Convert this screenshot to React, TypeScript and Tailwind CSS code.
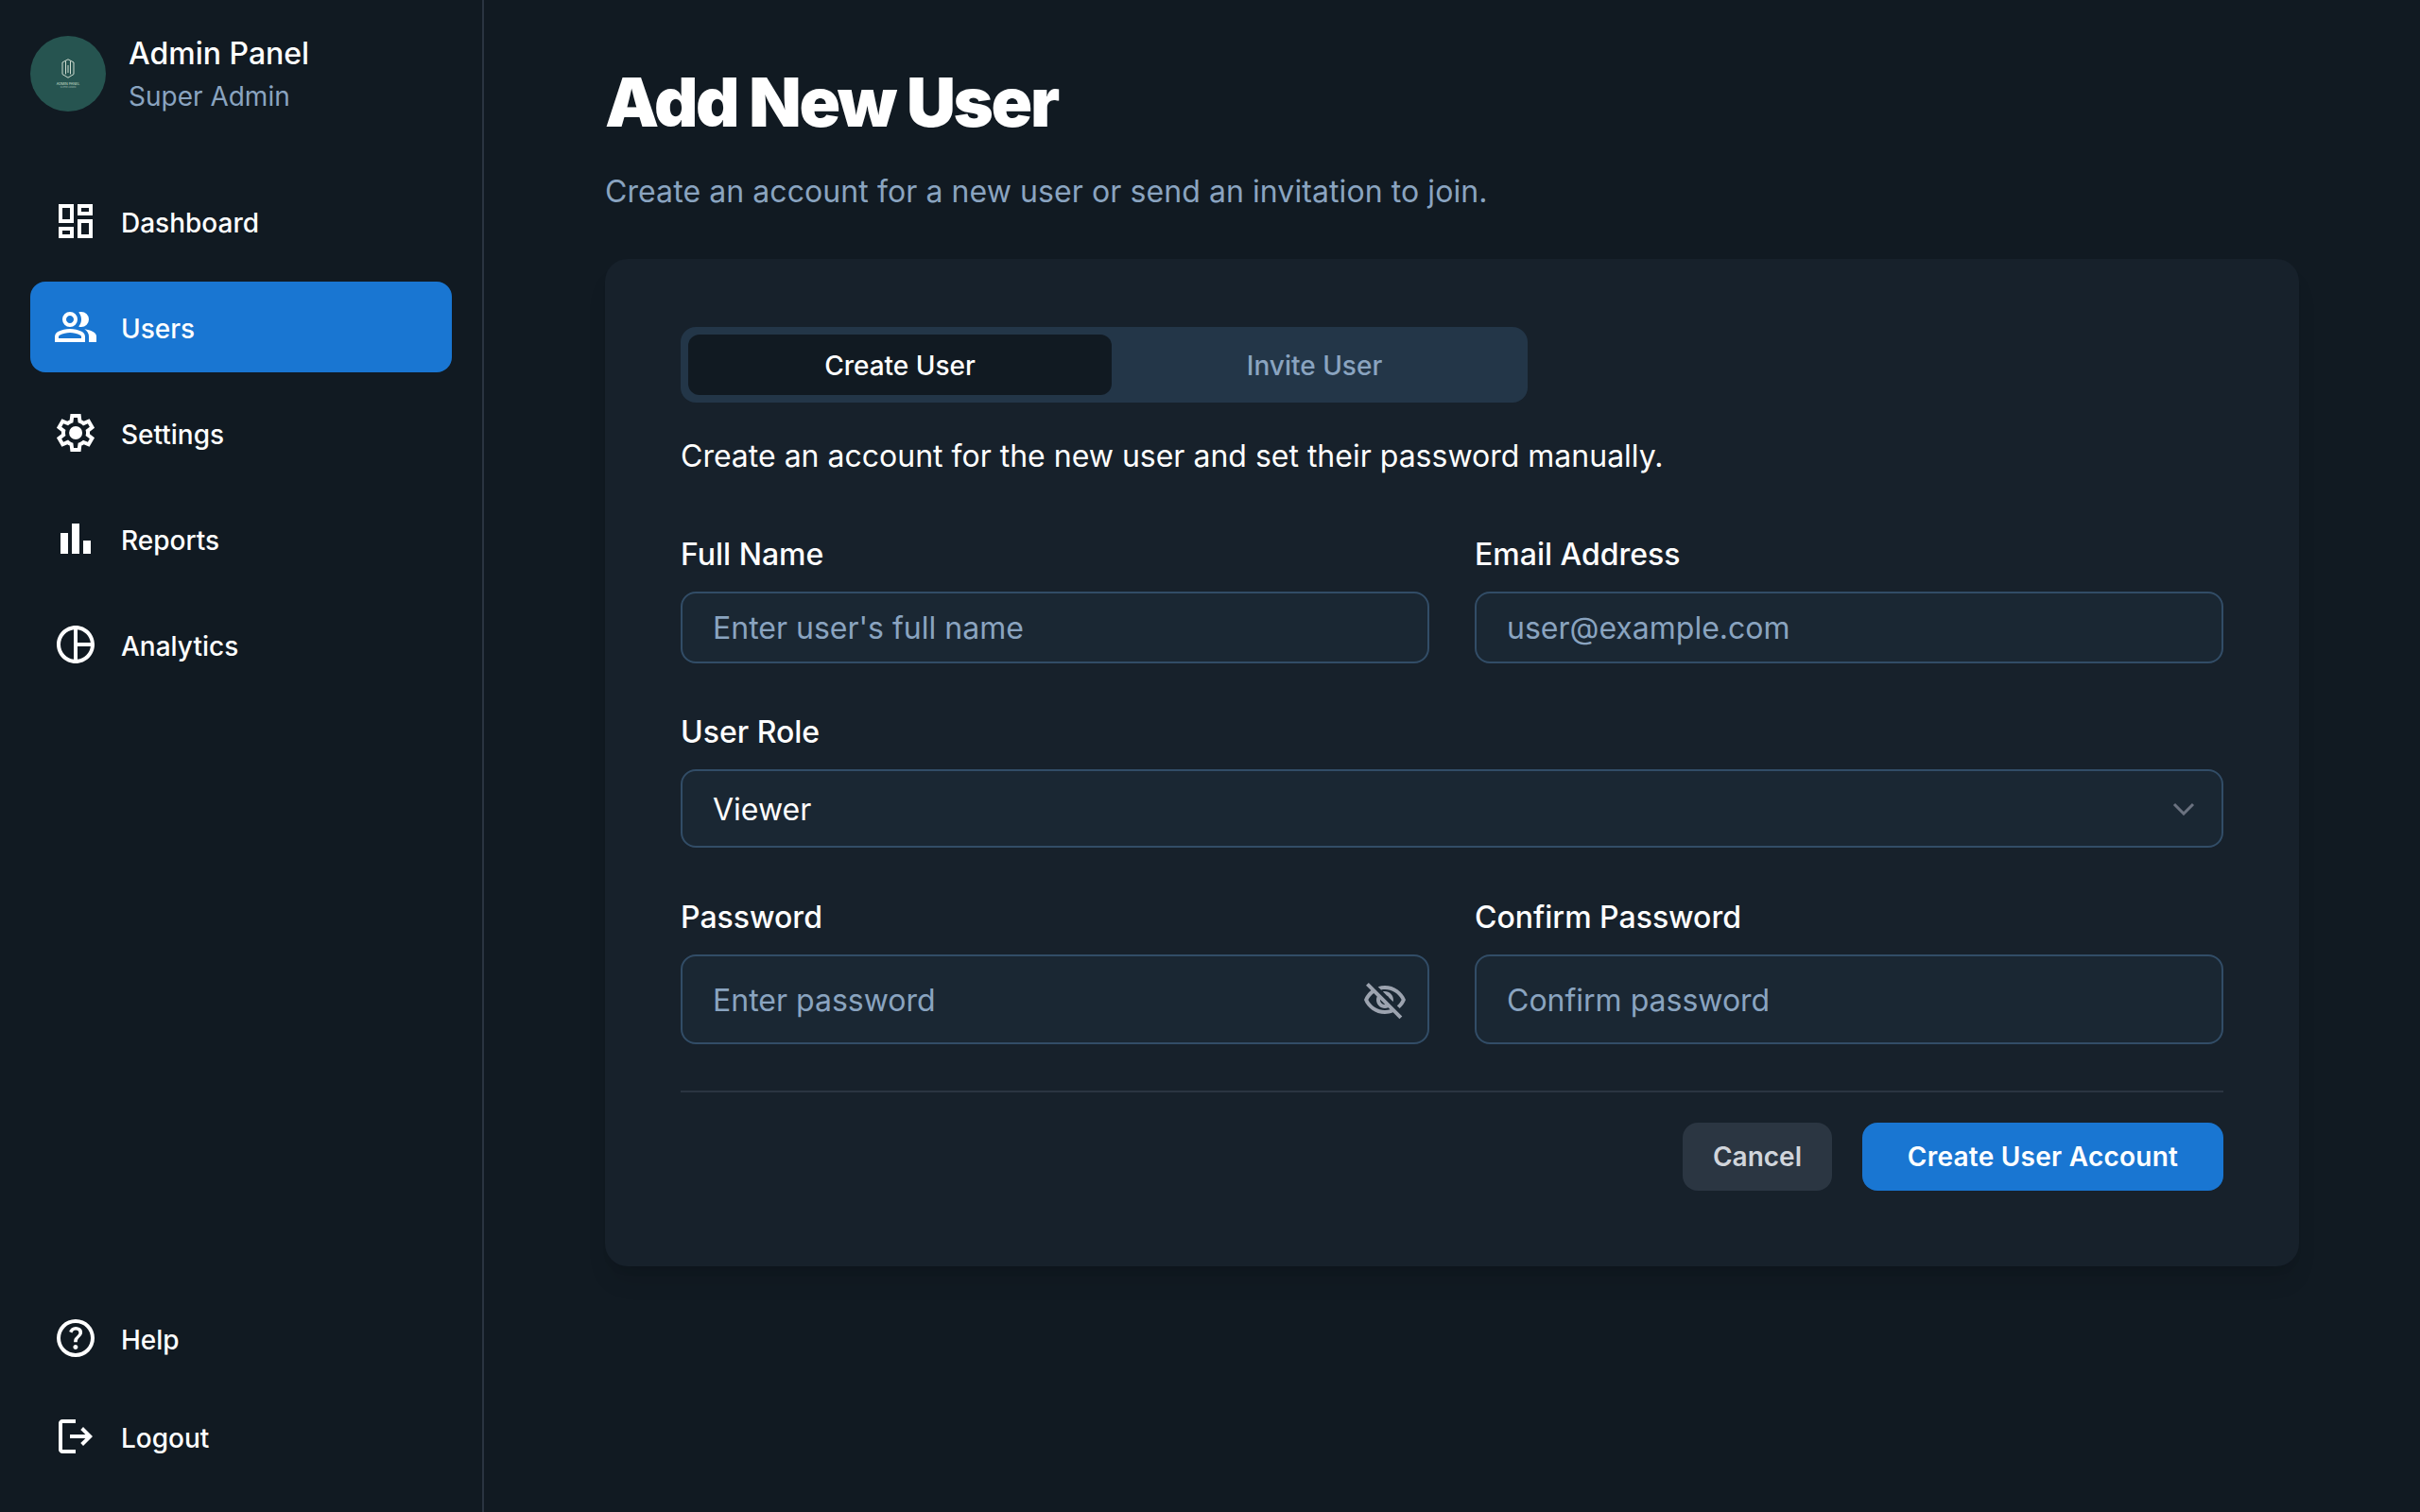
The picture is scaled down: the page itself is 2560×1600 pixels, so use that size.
import React from "react";
import { MdOutlineDashboard, MdOutlinePieChart } from "react-icons/md";

const font = "[font-family:Inter,'Noto_Sans',sans-serif]";

function Sym({ d, className = "w-12 h-12" }: { d: string; className?: string }) {
  return (
    <svg viewBox="0 0 24 24" className={className} fill="currentColor">
      <path d={d} />
    </svg>
  );
}
const groupD = "M1 20v-2.8q0-.85.438-1.563T2.6 14.55q1.55-.775 3.15-1.163T9 13q1.65 0 3.25.388t3.15 1.162q.725.375 1.163 1.088T17 17.2V20H1Zm18 0v-3q0-1.1-.612-2.113T16.65 13.15q1.275.15 2.4.513t2.1.887q.9.5 1.375 1.112T23 17v3h-4ZM9 12q-1.65 0-2.825-1.175T5 8q0-1.65 1.175-2.825T9 4q1.65 0 2.825 1.175T13 8q0 1.65-1.175 2.825T9 12Zm10-4q0 1.65-1.175 2.825T15 12q-.275 0-.7-.062t-.7-.138q.675-.8 1.038-1.775T15 8q0-1.05-.362-2.025T13.6 4.2q.35-.125.7-.163T15 4q1.65 0 2.825 1.175T19 8ZM3 18h12v-.8q0-.275-.138-.5t-.362-.35q-1.35-.675-2.725-1.012T9 15q-1.4 0-2.775.338T3.5 16.35q-.225.125-.363.35T3 17.2v.8Zm6-8q.825 0 1.413-.587T11 8q0-.825-.587-1.413T9 6q-.825 0-1.413.587T7 8q0 .825.587 1.413T9 10Z";
const settingsD = "m9.25 22-.4-3.2q-.325-.125-.612-.3t-.563-.375L4.7 19.375l-2.75-4.75 2.575-1.95Q4.5 12.5 4.5 12.337v-.675q0-.163.025-.337L1.95 9.375l2.75-4.75 2.975 1.25q.275-.2.575-.375t.6-.3l.4-3.2h5.5l.4 3.2q.325.125.612.3t.563.375l2.975-1.25 2.75 4.75-2.575 1.95q.025.175.025.338v.674q0 .163-.05.338l2.575 1.95-2.75 4.75-2.95-1.25q-.275.2-.575.375t-.6.3l-.4 3.2h-5.5Zm1.75-2h1.975l.35-2.65q.775-.2 1.438-.588t1.212-.937l2.475 1.025.975-1.7-2.15-1.625q.125-.35.175-.737T17.5 12q0-.4-.05-.787t-.175-.738l2.15-1.625-.975-1.7-2.475 1.05q-.55-.575-1.212-.962t-1.438-.588L13 4h-1.975l-.35 2.65q-.775.2-1.437.588t-1.213.937L5.55 7.15l-.975 1.7 2.15 1.6q-.125.375-.175.75t-.05.8q0 .4.05.775t.175.75l-2.15 1.625.975 1.7 2.475-1.05q.55.575 1.213.963t1.437.587L11 20Zm1.05-4.5q1.45 0 2.475-1.025T15.55 12q0-1.45-1.025-2.475T12.05 8.5q-1.475 0-2.488 1.025T8.55 12q0 1.45 1.012 2.475T12.05 15.5Z";
const barsD = "M4 9h4v11H4zM10 4h4v16h-4zM16 13h4v7h-4z";
const helpD = "M11.95 18q.525 0 .888-.363t.362-.887q0-.525-.362-.888t-.888-.362q-.525 0-.888.362t-.362.888q0 .525.362.887t.888.363Zm-.9-3.85h1.85q0-.825.188-1.3t1.062-1.3q.65-.65 1.025-1.238T15.55 8.9q0-1.4-1.025-2.15T12.1 6q-1.425 0-2.313.75T8.55 8.55l1.65.65q.125-.45.563-.975T12.1 7.7q.8 0 1.2.438t.4.962q0 .5-.3.938t-.75.812q-1.1.975-1.35 1.475t-.25 1.825ZM12 22q-2.075 0-3.9-.788t-3.175-2.137T2.788 15.9 2 12t.788-3.9 2.137-3.175T8.1 2.788 12 2t3.9.788 3.175 2.137T21.213 8.1 22 12t-.788 3.9-2.137 3.175-3.175 2.138T12 22Zm0-2q3.35 0 5.675-2.325T20 12t-2.325-5.675T12 4 6.325 6.325 4 12t2.325 5.675T12 20Z";
const logoutD = "M5 21q-.825 0-1.413-.587T3 19V5q0-.825.588-1.413T5 3h7v2H5v14h7v2H5zm11-4-1.375-1.45 2.55-2.55H9v-2h8.175l-2.55-2.55L16 7l5 5-5 5z";
const eyeOffD = "M12 6c3.79 0 7.17 2.13 8.82 5.5-.59 1.22-1.42 2.27-2.41 3.12l1.41 1.41c1.39-1.23 2.49-2.77 3.18-4.53C21.27 7.11 17 4 12 4c-1.27 0-2.49.2-3.64.57l1.65 1.65C10.66 6.09 11.32 6 12 6zm-1.07 1.14L13 9.21c.57.25 1.03.71 1.28 1.28l2.07 2.07c.08-.34.14-.7.14-1.07C16.5 9.01 14.48 7 12 7c-.37 0-.72.05-1.07.14zM2.01 3.87l2.68 2.68C3.06 7.83 1.77 9.53 1 11.5 2.73 15.89 7 19 12 19c1.52 0 2.98-.29 4.32-.82l3.42 3.42 1.41-1.41L3.42 2.45 2.01 3.87zm7.5 7.5l2.61 2.61c-.04.01-.08.02-.12.02-1.38 0-2.5-1.12-2.5-2.5 0-.05.01-.08.01-.13zm-3.4-3.4l1.75 1.75c-.23.55-.36 1.15-.36 1.78 0 2.48 2.02 4.5 4.5 4.5.63 0 1.23-.13 1.77-.36l.98.98c-.88.24-1.8.38-2.75.38-3.79 0-7.17-2.13-8.82-5.5.7-1.43 1.72-2.61 2.93-3.53z";

function Nav({ icon, label, active, h = "h-24" }: { icon: React.ReactNode; label: string; active?: boolean; h?: string }) {
  return (
    <a className={`flex items-center gap-6 px-6 ${h} rounded-2xl text-white text-[28px] font-medium ${active ? "bg-[#1976d2]" : ""}`}>
      <span className="flex w-12 h-12 shrink-0 items-center justify-center">{icon}</span>
      <span className="leading-10 pt-1">{label}</span>
    </a>
  );
}

function Label({ children }: { children: React.ReactNode }) {
  return <span className="h-12 text-[32px] leading-[50px] font-medium text-white">{children}</span>;
}

function Input({ label, placeholder, h, icon, pt = "pt-px" }: { label: string; placeholder: string; h: string; icon?: React.ReactNode; pt?: string }) {
  return (
    <label className="flex flex-col gap-4 flex-1 min-w-0">
      <Label>{label}</Label>
      <span className={`flex items-center ${h} rounded-2xl border-2 border-[#324d67] bg-[#1a2733] pl-8 ${icon ? "pr-[21px]" : "pr-8"}`}>
        <span className={`flex-1 ${pt} text-[32px] text-[#8aa4c0]`}>{placeholder}</span>
        {icon}
      </span>
    </label>
  );
}

export default function App() {
  return (
    <div className={`flex h-[1600px] bg-[#111a22] text-white ${font}`}>
      <aside className="flex w-[512px] shrink-0 flex-col border-r-2 border-[#2a3441] px-8 pt-[34px] pb-9">
        <div className="flex items-center gap-6">
          <div className="flex h-20 w-20 shrink-0 flex-col items-center rounded-full bg-[#265450] pt-6">
            <svg viewBox="0 0 14 21" className="h-[21px] w-[14px] text-[#cfdcd0]" fill="none" stroke="currentColor" strokeWidth="1">
              <path d="M7 .8l6 3.2v12.5l-6 3.7-6-3.7V4zM4.5 2.5v14M9.5 2.5v14M7 7v8" />
            </svg>
            <span className="mt-[4px] text-[3.6px] leading-[4px] whitespace-nowrap text-[#d5e0d4]">ADMIN PANEL</span>
            <span className="text-[2.4px] leading-[3px] whitespace-nowrap text-[#9fb8ae]">SUPER ADMIN</span>
          </div>
          <div className="flex flex-col">
            <span className="h-12 text-[32px] leading-[46px] font-medium text-white">Admin Panel</span>
            <span className="text-[28px] leading-10 text-[#8aa4c0]">Super Admin</span>
          </div>
        </div>
        <nav className="mt-16 flex flex-col gap-4">
          <Nav icon={<MdOutlineDashboard className="w-12 h-12" />} label="Dashboard" />
          <Nav active icon={<Sym d={groupD} />} label="Users" />
          <Nav icon={<Sym d={settingsD} />} label="Settings" />
          <Nav icon={<Sym d={barsD} />} label="Reports" />
          <Nav icon={<MdOutlinePieChart className="w-12 h-12" />} label="Analytics" />
        </nav>
        <div className="mt-auto flex flex-col gap-4">
          <Nav h="h-[88px]" icon={<Sym d={helpD} />} label="Help" />
          <Nav h="h-[88px]" icon={<Sym d={logoutD} />} label="Logout" />
        </div>
      </aside>
      <main className="flex-1 px-32 pt-16">
        <h1 className="h-[90px] text-[72px] leading-[88px] font-black tracking-[-2.3px] text-white">Add New User</h1>
        <p className="mt-6 h-12 text-[32px] leading-[50px] tracking-[0.08px] text-[#8aa4c0]">Create an account for a new user or send an invitation to join.</p>
        <section className="mt-12 rounded-3xl bg-[#17212b] px-20 pt-[72px] pb-20 shadow-xl">
          <div className="flex h-20 w-[896px] rounded-2xl bg-[#233648] p-2">
            <button className="w-[448px] rounded-xl bg-[#111a22] pt-[2px] text-[28px] font-medium text-white">Create User</button>
            <button className="flex-1 pt-[2px] pr-[3px] text-[28px] font-medium text-[#8aa4c0]">Invite User</button>
          </div>
          <p className="mt-8 h-12 text-[32px] leading-[50px] text-white">Create an account for the new user and set their password manually.</p>
          <div className="mt-14 flex gap-12">
            <Input label="Full Name" placeholder="Enter user's full name" h="h-[76px]" />
            <Input label="Email Address" placeholder="user@example.com" h="h-[76px]" />
          </div>
          <div className="mt-12 flex flex-col gap-4">
            <Label>User Role</Label>
            <div className="flex h-[83px] items-center justify-between rounded-2xl border-2 border-[#324d67] bg-[#1a2733] pl-8 pr-[28px]">
              <span className="pt-[2px] text-[32px] text-white">Viewer</span>
              <svg viewBox="0 0 24 14" className="h-[14px] w-6 text-[#6b7280]" fill="none" stroke="currentColor" strokeWidth="3">
                <path d="M2 2l10 10L22 2" />
              </svg>
            </div>
          </div>
          <div className="mt-[49px] flex gap-12">
            <Input label="Password" placeholder="Enter password" h="h-[95px]" pt="pt-[2px]" icon={<span className="mt-[3px] shrink-0 text-[#9ca3af]"><Sym d={eyeOffD} /></span>} />
            <Input label="Confirm Password" placeholder="Confirm password" h="h-[95px]" pt="pt-[2px]" />
          </div>
          <div className="mt-[49px] flex justify-end gap-8 border-t-2 border-[#2a3441] pt-8">
            <button className="h-[72px] w-[158px] rounded-2xl bg-[#2b3642] text-[28px] font-semibold text-[#d1d5db]">Cancel</button>
            <button className="h-[72px] w-[382px] rounded-2xl bg-[#1976d2] text-[28px] font-semibold tracking-[0.25px] text-white">Create User Account</button>
          </div>
        </section>
      </main>
    </div>
  );
}
